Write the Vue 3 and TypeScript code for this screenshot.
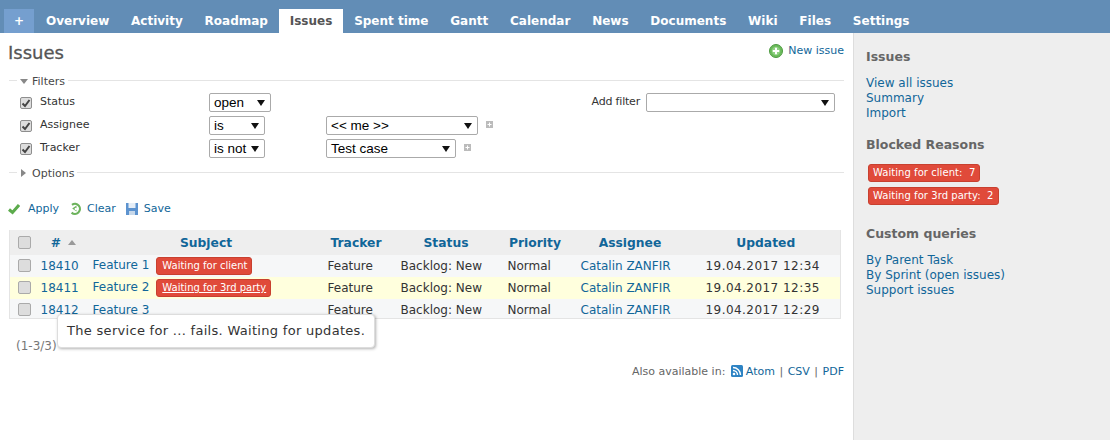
<script setup lang="ts">
const tabs = ['Overview', 'Activity', 'Roadmap', 'Issues', 'Spent time', 'Gantt', 'Calendar', 'News', 'Documents', 'Wiki', 'Files', 'Settings']

const filters = [
  { label: 'Status', op: 'open', opClass: 'op-open', value: '' },
  { label: 'Assignee', op: 'is', opClass: 'op-is', value: '<< me >>', valueClass: 'val-me' },
  { label: 'Tracker', op: 'is not', opClass: 'op-isnot', value: 'Test case', valueClass: 'val-test' }
]

const issues = [
  { id: 18410, subject: 'Feature 1', tag: 'Waiting for client', updated: '19.04.2017 12:34', rowClass: 'odd', underline: false },
  { id: 18411, subject: 'Feature 2', tag: 'Waiting for 3rd party', updated: '19.04.2017 12:35', rowClass: 'hl', underline: true },
  { id: 18412, subject: 'Feature 3', tag: '', updated: '19.04.2017 12:29', rowClass: 'odd', underline: false }
]
</script>

<template>
  <div class="page">
    <nav class="menu">
      <a class="plus">+</a>
      <a v-for="t in tabs" :key="t" class="tab" :class="{ selected: t === 'Issues' }">{{ t }}</a>
    </nav>

    <div class="body">
      <main class="content">
        <div class="title-row">
          <h2>Issues</h2>
          <a class="new-issue">
            <svg width="14" height="14" viewBox="0 0 14 14">
              <circle cx="7" cy="7" r="6.5" fill="#6cbb5c" stroke="#4d9a40" />
              <circle cx="7" cy="7" r="4.2" fill="#8fd182" />
              <path d="M7 3.8v6.4M3.8 7h6.4" stroke="#fff" stroke-width="2" />
            </svg>
            New issue
          </a>
        </div>

        <fieldset class="group">
          <legend><i class="arrow-down"></i>Filters</legend>
          <div class="filters">
            <div class="filter-list">
              <div v-for="f in filters" :key="f.label" class="filter-row">
                <span class="check">
                  <svg width="10" height="10" viewBox="0 0 10 10"><path d="M1.5 5.5L4 8l4.5-6" fill="none" stroke="#444" stroke-width="2" /></svg>
                </span>
                <label class="filter-label">{{ f.label }}</label>
                <div class="op-cell">
                  <span class="select" :class="f.opClass">{{ f.op }}</span>
                </div>
                <template v-if="f.value">
                  <span class="select" :class="f.valueClass">{{ f.value }}</span>
                  <svg class="mini-add" width="7" height="7" viewBox="0 0 7 7">
                    <rect width="7" height="7" fill="#bbb" />
                    <path d="M3.5 1.5v4M1.5 3.5h4" stroke="#fff" />
                  </svg>
                </template>
              </div>
            </div>
            <div class="add-filter">
              <label>Add filter</label>
              <span class="select add-select"></span>
            </div>
          </div>
        </fieldset>

        <fieldset class="group options">
          <legend><i class="arrow-right"></i>Options</legend>
        </fieldset>

        <div class="actions">
          <a>
            <svg width="12" height="12" viewBox="0 0 12 12"><path d="M1 6.5L4.5 9.5 11 2" fill="none" stroke="#5cab4c" stroke-width="3" /></svg>
            Apply
          </a>
          <a>
            <svg width="13" height="14" viewBox="0 0 13 14">
              <path d="M3 2.8A5 5 0 1 1 2.6 10.6" fill="none" stroke="#6cb35c" stroke-width="2.2" />
              <path d="M7.5 3.4v6L3.2 6.4z" fill="#6cb35c" />
              <circle cx="6.8" cy="7" r="1.2" fill="#fff" />
            </svg>
            Clear
          </a>
          <a class="save">
            <svg width="14" height="14" viewBox="0 0 14 14">
              <path d="M1 1h12v12H1z" fill="#5d93cf" />
              <path d="M3.5 1h7v5h-7z" fill="#e6eef7" />
              <path d="M4 9h6v4H4z" fill="#c7d8ea" />
            </svg>
            Save
          </a>
        </div>

        <div class="table-wrap">
          <table class="issues">
            <thead>
              <tr>
                <th class="c-check"><span class="box"></span></th>
                <th class="c-id"># <i class="sort"></i></th>
                <th class="c-subject">Subject</th>
                <th class="c-tracker">Tracker</th>
                <th class="c-status">Status</th>
                <th class="c-priority">Priority</th>
                <th class="c-assignee">Assignee</th>
                <th class="c-updated">Updated</th>
              </tr>
            </thead>
            <tbody>
              <tr v-for="i in issues" :key="i.id" :class="i.rowClass">
                <td class="c-check"><span class="box"></span></td>
                <td class="left"><a>{{ i.id }}</a></td>
                <td class="left">
                  <a>{{ i.subject }}</a>
                  <span v-if="i.tag" class="tag" :class="{ under: i.underline }">{{ i.tag }}</span>
                </td>
                <td class="left">Feature</td>
                <td class="left">Backlog: New</td>
                <td class="left">Normal</td>
                <td class="left"><a>Catalin ZANFIR</a></td>
                <td class="left date">{{ i.updated }}</td>
              </tr>
            </tbody>
          </table>
          <div class="tooltip">The service for ... fails. Waiting for updates.</div>
        </div>

        <p class="pagination">(1-3/3)</p>

        <p class="other-formats">
          Also available in:
          <svg width="12" height="12" viewBox="0 0 12 12">
            <rect width="12" height="12" rx="1.5" fill="#2d83c4" />
            <circle cx="3" cy="9" r="1.3" fill="#fff" />
            <path d="M2 5.5A4.5 4.5 0 0 1 6.5 10M2 2.5A7.5 7.5 0 0 1 9.5 10" fill="none" stroke="#fff" stroke-width="1.4" />
          </svg>
          <span class="format-links"><a>Atom</a> | <a>CSV</a> | <a>PDF</a></span>
        </p>
      </main>

      <aside class="sidebar">
        <h3>Issues</h3>
        <a>View all issues</a>
        <a>Summary</a>
        <a>Import</a>

        <h3>Blocked Reasons</h3>
        <div class="side-tags">
          <span class="tag">Waiting for client:&nbsp; 7</span>
          <span class="tag">Waiting for 3rd party:&nbsp; 2</span>
        </div>

        <h3>Custom queries</h3>
        <a>By Parent Task</a>
        <a>By Sprint (open issues)</a>
        <a>Support issues</a>
      </aside>
    </div>
  </div>
</template>

<style>
html, body {
  margin: 0;
  background: #fff;
}
</style>

<style scoped>
.page {
  width: 1110px;
  height: 440px;
  overflow: hidden;
  font-family: "DejaVu Sans", Verdana, sans-serif;
  font-size: 12px;
  color: #333;
}
a { color: #169; }

.menu {
  height: 33px;
  box-sizing: border-box;
  padding: 9px 0 0 4px;
  display: flex;
  background: #628db6;
}
.menu a {
  height: 24px;
  line-height: 24px;
  color: #fff;
  font-weight: bold;
  font-size: 12px;
}
.plus {
  width: 30px;
  text-align: center;
  background: #759fcf;
  margin-right: 2px;
}
.tab {
  padding: 0 10px;
  margin-right: 1.8px;
}
.menu a.selected {
  padding: 0 11px;
  margin: 0 0.8px 0 -1px;
  background: #fff;
  color: #555;
}

.body { display: flex; height: 407px; }
.content {
  width: 853px;
  box-sizing: border-box;
  padding: 6px 9px 0 9px;
}
.sidebar {
  flex: 1;
  box-sizing: border-box;
  background: #eee;
  border-left: 1px solid #ddd;
  padding: 0 12px;
  display: flex;
  flex-direction: column;
  align-items: flex-start;
}
.sidebar a { line-height: 15px; }
.sidebar h3 {
  margin: 16px 0 11px;
  font-size: 12.5px;
  line-height: 16px;
  color: #666;
}
.side-tags {
  display: flex;
  flex-direction: column;
  align-items: flex-start;
  gap: 5px;
  margin-left: 2px;
  margin-bottom: 5px;
}

.title-row {
  display: flex;
  justify-content: space-between;
  height: 34px;
}
h2 {
  margin: 0 0 0 -1px;
  font-size: 18px;
  line-height: 28px;
  font-weight: normal;
  -webkit-text-stroke: 0.3px #555;
  color: #555;
}
.new-issue {
  display: flex;
  align-items: flex-start;
  gap: 5px;
  font-size: 11px;
  line-height: 14px;
  margin-top: 5px;
}

.group {
  border: 0;
  border-top: 1px solid #e4e4e4;
  margin: 0;
  padding: 0;
  min-width: 0;
  font-size: 11px;
}
legend {
  margin-left: 8px;
  padding: 2px 3px 0;
  line-height: 13px;
  color: #484848;
}
.arrow-down {
  display: inline-block;
  border: 4px solid transparent;
  border-top: 5px solid #888;
  border-bottom: 0;
  margin-right: 4px;
  vertical-align: 1px;
}
.arrow-right {
  display: inline-block;
  border: 4px solid transparent;
  border-left: 5px solid #888;
  border-right: 0;
  margin: 0 6px 0 1px;
}
.filters {
  display: flex;
  justify-content: space-between;
  height: 73px;
  padding-top: 5px;
  box-sizing: border-box;
}
.filter-list { display: flex; flex-direction: column; gap: 4px; }
.filter-row {
  display: flex;
  align-items: flex-start;
  height: 19px;
  padding-left: 11px;
}
.check {
  width: 10px;
  height: 10px;
  margin-top: 4px;
  padding: 0;
  display: flex;
  border: 1px solid #8e8e8e;
  border-radius: 2px;
  background: #ddd;
}
.filter-label {
  width: 169px;
  margin-left: 8px;
  margin-top: 2px;
  line-height: 14px;
}
.op-cell { width: 117px; }
.select {
  display: inline-block;
  position: relative;
  box-sizing: border-box;
  height: 19px;
  line-height: 18px;
  padding-left: 4px;
  border: 1px solid #aaa;
  border-radius: 2px;
  color: #000;
  font-family: "Liberation Sans", Arial, sans-serif;
  font-size: 13.5px;
  background: #fff;
}
.select::after {
  content: "";
  position: absolute;
  right: 5px;
  top: 6px;
  border: 4px solid transparent;
  border-top: 6px solid #111;
  border-bottom: 0;
}
.op-open { width: 62px; }
.op-is { width: 56px; }
.op-isnot { width: 56px; }
.val-me { width: 152px; }
.val-test { width: 130px; }
.mini-add { margin: 5px 0 0 8px; }
.add-filter {
  display: flex;
  gap: 6px;
  height: 19px;
  margin-right: 9px;
  line-height: 17px;
  letter-spacing: -0.2px;
}
.add-select { width: 189px; }

.options { margin-top: 4px; height: 14px; }

.actions {
  display: flex;
  gap: 10px;
  margin-top: 22px;
  line-height: 14px;
  font-size: 11px;
  margin-left: -1px;
}
.actions a { display: flex; gap: 8px; align-items: center; }
.actions a + a { gap: 5px; }
.actions a.save { margin-left: -1px; }

.table-wrap {
  position: relative;
  margin-top: 14px;
}
.issues {
  width: 832px;
  border-collapse: collapse;
  table-layout: fixed;
  border: 1px solid #e4e4e4;
  border-top: 0;
}
.issues th {
  box-sizing: border-box;
  height: 25px;
  padding: 0;
  background: #eee;
  color: #169;
  font-size: 12.3px;
}
.issues td {
  padding: 0;
  text-align: center;
  white-space: nowrap;
  height: 22px;
}
.issues tr:last-child td {
  height: 17px;
  padding-top: 2px;
}
.issues td.left { text-align: left; padding-left: 2px; }
tr.odd { background: #f6f7f8; }
tr.hl { background: #ffffdd; }
.date { letter-spacing: 0.45px; }
.c-check { width: 29px; }
.c-id { width: 52px; }
.issues th.c-id { padding-right: 2px; }
.c-subject { width: 235px; }
.issues th.c-subject { padding-right: 4px; }
.c-tracker { width: 73px; }
.issues th.c-tracker { padding-right: 12px; }
.c-status { width: 107px; }
.issues th.c-status { padding-right: 12px; }
.c-priority { width: 73px; }
.issues th.c-priority { padding-right: 14px; }
.c-assignee { width: 125px; }
.issues th.c-assignee { padding-right: 22px; }
.issues th.c-updated { padding-right: 12px; }
.box {
  display: inline-block;
  width: 11px;
  height: 11px;
  vertical-align: -2px;
  border: 1px solid #aaa;
  border-radius: 2px;
  background: #ddd;
}
.sort {
  display: inline-block;
  margin-left: 3px;
  border: 4px solid transparent;
  border-bottom: 5px solid #999;
  border-top: 0;
  vertical-align: 2px;
}
.tag {
  display: inline-block;
  margin-left: 7px;
  padding: 0 4px 0 5px;
  line-height: 16px;
  font-size: 10px;
  color: #fff;
  background: #e04a3a;
  border: 1px solid #c8402f;
  border-radius: 3px;
}
.side-tags .tag { margin-left: 0; padding: 0 4px; letter-spacing: 0.05px; }
.tag.under { text-decoration: underline; }

.tooltip {
  position: absolute;
  left: 48px;
  top: 84px;
  padding: 9px;
  background: #fff;
  border: 1px solid #ddd;
  border-radius: 4px;
  box-shadow: 1px 1px 3px rgba(0, 0, 0, 0.3);
  white-space: nowrap;
  font-size: 13px;
  letter-spacing: 0.3px;
  line-height: 14px;
}
.pagination {
  margin: 20px 0 0 7px;
  line-height: 14px;
  color: #777;
}
.other-formats {
  margin: 12px 0 0;
  text-align: right;
  color: #666;
  font-size: 11px;
  line-height: 14px;
}
.format-links { word-spacing: 1px; }
.other-formats svg { vertical-align: -2px; margin: 0 3px 0 2px; }
</style>
